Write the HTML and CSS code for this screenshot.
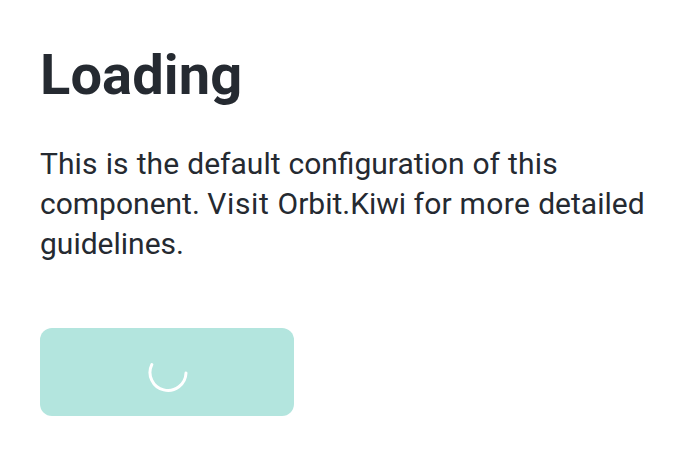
FILE: index.html
```html
<!DOCTYPE html>
<html lang="en">
<head>
<meta charset="utf-8">
<title>Loading</title>
<link rel="stylesheet" href="styles.css">
</head>
<body>
<main class="story">
  <h1 class="title">Loading</h1>
  <p class="description"><span class="spaced"><span class="track-xs">This is the </span>default configuration of <span class="track-sm">this</span></span> component. <span class="track-lg">Visit </span>Orbit.Kiwi <span class="track-sm">for </span><span class="track-md">more </span>detailed guidelines.</p>
  <button class="button" type="button" disabled aria-label="Loading">
    <svg class="spinner" viewBox="0 0 40 40" aria-hidden="true"><path d="M3.8 11.6A18 18 0 1 0 38 20"/></svg>
  </button>
</main>
</body>
</html>
```
FILE: styles.css
```css
* { box-sizing: border-box; }
body { margin: 0; background: #fff; color: #252a31; font-family: Roboto, "Liberation Sans", sans-serif; }
.story { padding: 39px 0 40px 40px; }
.title { margin: 0 0 33px; font-size: 56px; line-height: 72px; font-weight: 700; letter-spacing: 0.1px; }
.description { margin: 0 0 64px; font-size: 30px; line-height: 40px; font-weight: 400; }
.spaced { word-spacing: 0.5px; }
.track-xs { letter-spacing: 0.1px; }
.track-sm { letter-spacing: 0.2px; }
.track-md { letter-spacing: 0.4px; }
.track-lg { letter-spacing: 0.63px; }
.button { display: flex; align-items: center; justify-content: center; width: 254px; height: 88px; padding: 1px 0 0 2px; border: 0; border-radius: 12px; background: #b3e5de; }
.spinner { width: 40px; height: 40px; fill: none; stroke: #fff; stroke-width: 3; stroke-linecap: round; }
```
